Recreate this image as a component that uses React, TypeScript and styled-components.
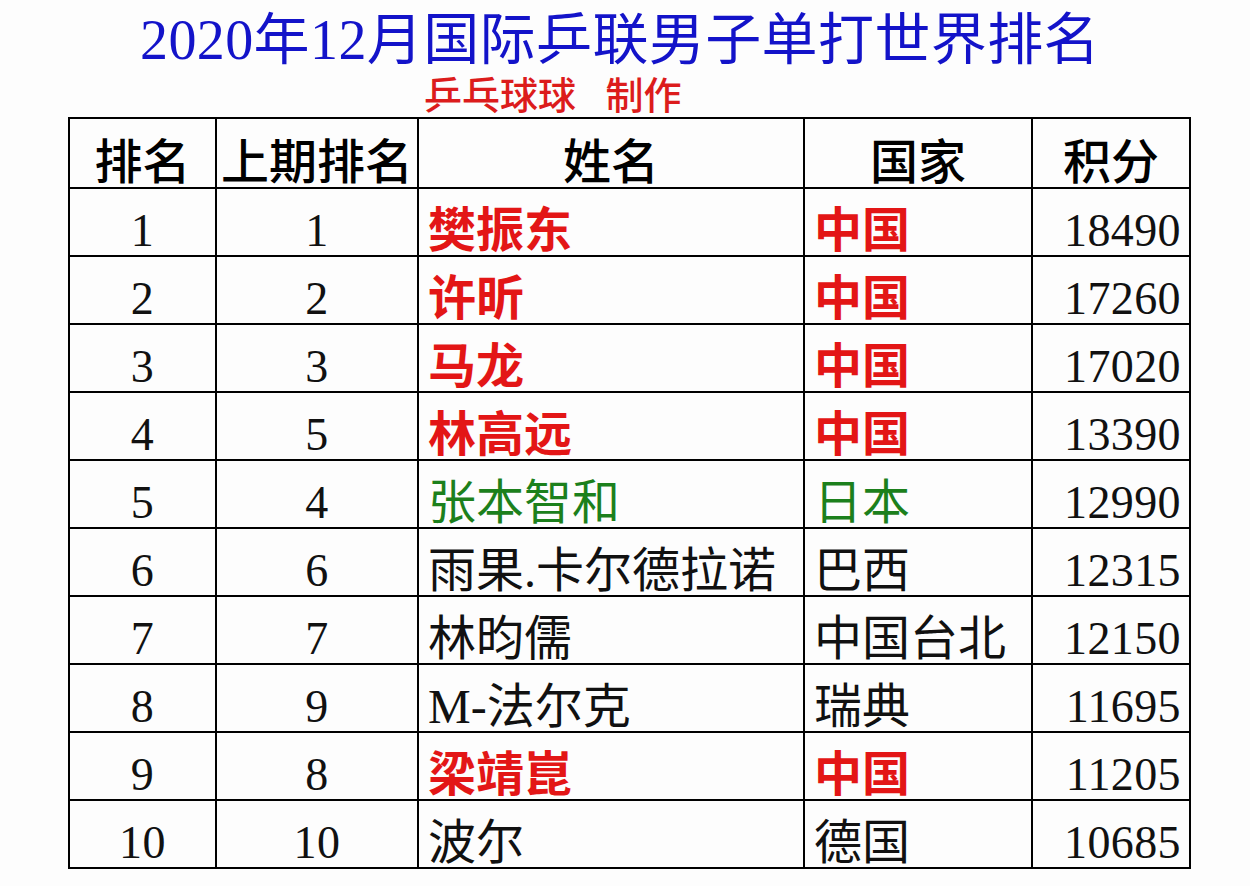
import React, { FC } from "react";
import styled, { createGlobalStyle } from "styled-components";

const GlobalStyle = createGlobalStyle`
  html, body {
    margin: 0;
    padding: 0;
    background: #fdfdfd;
  }
  body {
    font-family: "Liberation Serif", "Noto Sans CJK SC", serif;
  }
`;

type Tone = "red" | "green" | "plain";

interface RankRow {
  rank: number;
  prev: number;
  name: string;
  country: string;
  points: number;
  tone: Tone;
}

const rows: RankRow[] = [
  { rank: 1, prev: 1, name: "樊振东", country: "中国", points: 18490, tone: "red" },
  { rank: 2, prev: 2, name: "许昕", country: "中国", points: 17260, tone: "red" },
  { rank: 3, prev: 3, name: "马龙", country: "中国", points: 17020, tone: "red" },
  { rank: 4, prev: 5, name: "林高远", country: "中国", points: 13390, tone: "red" },
  { rank: 5, prev: 4, name: "张本智和", country: "日本", points: 12990, tone: "green" },
  { rank: 6, prev: 6, name: "雨果.卡尔德拉诺", country: "巴西", points: 12315, tone: "plain" },
  { rank: 7, prev: 7, name: "林昀儒", country: "中国台北", points: 12150, tone: "plain" },
  { rank: 8, prev: 9, name: "M-法尔克", country: "瑞典", points: 11695, tone: "plain" },
  { rank: 9, prev: 8, name: "梁靖崑", country: "中国", points: 11205, tone: "red" },
  { rank: 10, prev: 10, name: "波尔", country: "德国", points: 10685, tone: "plain" },
];

const toneColor: Record<Tone, string> = {
  red: "#e31616",
  green: "#1c801c",
  plain: "#111111",
};

const Page = styled.div`
  width: 1250px;
  height: 886px;
  padding-top: 12px;
  box-sizing: border-box;
`;

const Title = styled.h1`
  margin: 0;
  padding-right: 10px;
  height: 56px;
  line-height: 56px;
  font-size: 56px;
  font-weight: 400;
  letter-spacing: 0.4px;
  text-align: center;
  color: #1313c9;
  white-space: nowrap;
`;

const Subtitle = styled.div`
  margin-top: 9px;
  padding-left: 424px;
  height: 38px;
  line-height: 38px;
  font-size: 38px;
  font-weight: 500;
  color: #dc1c1c;
  word-spacing: 20px;
  white-space: nowrap;
`;

const Table = styled.table`
  margin: 2px 0 0 68px;
  width: 1121px;
  border-collapse: collapse;
  table-layout: fixed;
`;

const HeadCell = styled.th`
  height: 67px;
  padding: 20px 0 0;
  border: 2px solid #000;
  vertical-align: top;
  box-sizing: border-box;
  font-size: 48px;
  line-height: 48px;
  font-weight: 500;
  color: #000;
  text-align: center;
  white-space: nowrap;
`;

const Cell = styled.td<{ $align: "left" | "center" | "right"; $tone?: Tone }>`
  height: 68px;
  padding: 18px ${({ $align }) => ($align === "right" ? "8px" : "0")} 0
    ${({ $align }) => ($align === "left" ? "9px" : "0")};
  border: 2px solid #000;
  vertical-align: top;
  box-sizing: border-box;
  font-size: 46px;
  line-height: 47px;
  letter-spacing: 0.4px;
  text-align: ${({ $align }) => $align};
  white-space: nowrap;
  color: ${({ $tone }) => toneColor[$tone ?? "plain"]};
  font-weight: ${({ $tone }) => ($tone === "red" ? 600 : 400)};
`;

const NameText = styled.span`
  font-size: 48px;
  letter-spacing: 0;
`;

const widths = [147, 202, 386, 228, 158];

const App: FC = () => {
  return (
    <>
      <GlobalStyle />
      <Page>
        <Title>2020年12月国际乒联男子单打世界排名</Title>
        <Subtitle>乒乓球球 制作</Subtitle>
        <Table>
          <colgroup>
            {widths.map((w, i) => (
              <col key={i} style={{ width: w }} />
            ))}
          </colgroup>
          <thead>
            <tr>
              <HeadCell>排名</HeadCell>
              <HeadCell>上期排名</HeadCell>
              <HeadCell>姓名</HeadCell>
              <HeadCell>国家</HeadCell>
              <HeadCell>积分</HeadCell>
            </tr>
          </thead>
          <tbody>
            {rows.map((r) => (
              <tr key={r.rank}>
                <Cell $align="center">{r.rank}</Cell>
                <Cell $align="center">{r.prev}</Cell>
                <Cell $align="left" $tone={r.tone}>
                  <NameText>{r.name}</NameText>
                </Cell>
                <Cell $align="left" $tone={r.tone}>
                  <NameText>{r.country}</NameText>
                </Cell>
                <Cell $align="right">{r.points}</Cell>
              </tr>
            ))}
          </tbody>
        </Table>
      </Page>
    </>
  );
};

export default App;
